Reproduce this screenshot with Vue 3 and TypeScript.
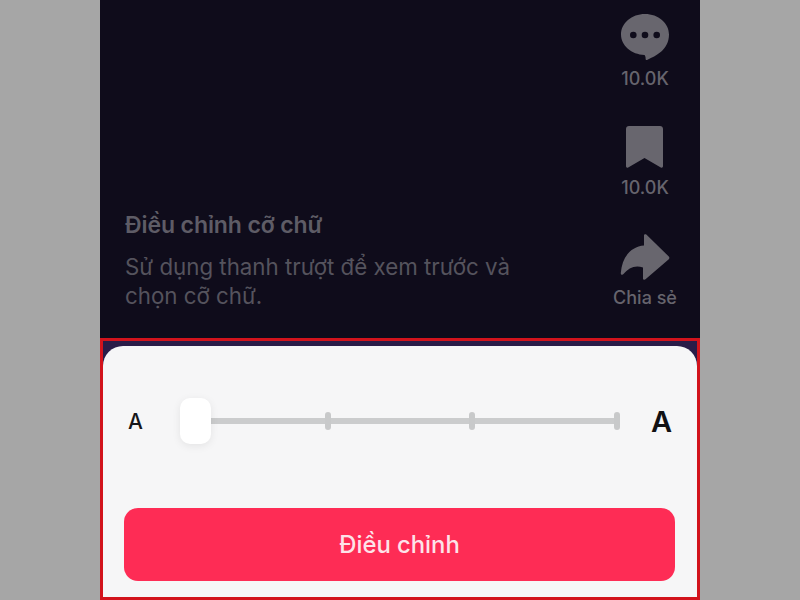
<script setup lang="ts">
const stats = [
  { id: 'comment', label: '10.0K' },
  { id: 'bookmark', label: '10.0K' },
  { id: 'share', label: 'Chia sẻ' },
]
const ticks = [1, 2, 3]
</script>

<template>
  <div class="page">
    <div class="phone">
      <section class="feed">
        <div class="intro">
          <h1 class="intro-title">Điều chỉnh cỡ chữ</h1>
          <p class="intro-text">Sử dụng thanh trượt để xem trước và chọn cỡ chữ.</p>
        </div>
        <div class="actions">
          <div v-for="stat in stats" :key="stat.id" class="action" :class="'action-' + stat.id">
            <svg v-if="stat.id === 'comment'" class="icon" width="48" height="46" viewBox="0 0 48 46">
              <path
                fill="#68666e"
                d="M24 0C10.700 0 0 9.100 0 20.500C0 31.500 10.500 40.500 23.500 41C24.500 42 24.700 44 24.600 45C24.600 46 25.500 46.300 26.500 45.700C31 43.500 35.500 41.500 39 38.500C44.500 34.500 48 28 48 20.500C48 9.100 37.300 0 24 0Z"
              />
              <circle cx="12.300" cy="21" r="3.300" fill="#0f0c1b" />
              <circle cx="24" cy="21" r="3.300" fill="#0f0c1b" />
              <circle cx="35.700" cy="21" r="3.300" fill="#0f0c1b" />
            </svg>
            <svg v-else-if="stat.id === 'bookmark'" class="icon" width="37" height="42" viewBox="0 0 37 42">
              <path
                fill="#68666e"
                d="M3 0H34C35.800 0 37 1.200 37 3V40C37 41.500 36 42 34.800 41.400L18.500 32L2.200 41.400C1 42 0 41.500 0 40V3C0 1.200 1.200 0 3 0Z"
              />
            </svg>
            <svg v-else class="icon" width="50" height="46" viewBox="0 0 50 46">
              <path
                fill="#68666e"
                d="M24 1.500C24 0.200 25.400 -0.300 26.300 0.600L48.800 22.500C49.600 23.300 49.600 24.400 48.800 25.200L25.500 45.300C24.500 46.200 23 45.700 23 44.500V33.500C15 30.500 8.500 34 3.500 40C2.400 41.300 0.700 40.600 0.800 39C2 23 11 12.500 24 11.500Z"
              />
            </svg>
            <span class="action-label">{{ stat.label }}</span>
          </div>
        </div>
      </section>

      <section class="panel">
        <div class="sheet">
          <div class="size-row">
            <span class="size-small">A</span>
            <div class="slider">
              <div class="track"></div>
              <span v-for="t in ticks" :key="t" class="tick" :class="'tick-' + t"></span>
              <div class="thumb"></div>
            </div>
            <span class="size-large">A</span>
          </div>
          <button class="apply-btn" type="button">Điều chỉnh</button>
        </div>
      </section>
    </div>
  </div>
</template>

<style scoped>
.page {
  width: 800px;
  height: 600px;
  overflow: hidden;
  background: #a6a6a6;
  font-family: Inter, "Noto Sans", sans-serif;
}

.phone {
  width: 600px;
  height: 600px;
  margin: 0 auto;
  display: flex;
  flex-direction: column;
}

.feed {
  height: 338px;
  box-sizing: border-box;
  background: #0f0c1b;
  display: flex;
  justify-content: space-between;
  padding: 14px 20px 0 25px;
}

.intro {
  width: 400px;
  padding-top: 196px;
}

.intro-title {
  margin: 0;
  font-size: 23px;
  line-height: 30px;
  font-weight: 600;
  color: #5e5c66;
  letter-spacing: -0.1px;
}

.intro-text {
  margin: 12px 0 0;
  font-size: 22.3px;
  line-height: 29px;
  font-weight: 400;
  color: #55535d;
}

.actions {
  width: 70px;
  display: flex;
  flex-direction: column;
  align-items: center;
}

.action {
  display: flex;
  flex-direction: column;
  align-items: center;
}

.action-bookmark {
  margin-top: 36px;
}

.action-share {
  margin-top: 35px;
}

.icon {
  display: block;
}

.action-label {
  margin-top: 8px;
  font-size: 18px;
  line-height: 22px;
  font-weight: 500;
  color: #66646d;
  white-space: nowrap;
}

.action-bookmark .action-label {
  margin-top: 9px;
}

.action-share .action-label {
  margin-top: 7px;
}

.panel {
  flex: 1;
  min-height: 0;
  box-sizing: border-box;
  border: 3px solid #d2131c;
  background: #2a1c48;
  padding-top: 5px;
}

.sheet {
  height: 100%;
  box-sizing: border-box;
  background: #f6f6f7;
  border-radius: 20px 20px 0 0;
  padding: 52px 22px 0 21px;
}

.size-row {
  display: flex;
  align-items: center;
  height: 46px;
}

.size-small {
  width: 56px;
  padding-left: 4px;
  box-sizing: border-box;
  font-size: 21px;
  font-weight: 500;
  color: #16161a;
}

.slider {
  position: relative;
  flex: 1;
  height: 46px;
}

.track {
  position: absolute;
  left: 0;
  right: 0;
  top: 20px;
  height: 6px;
  background: #cbcccd;
}

.tick {
  position: absolute;
  top: 14px;
  width: 6px;
  height: 18px;
  border-radius: 3px;
  background: #c8c9ca;
}

.tick-1 {
  left: 145px;
}

.tick-2 {
  left: 289px;
}

.tick-3 {
  right: -2px;
}

.thumb {
  position: absolute;
  left: 0;
  top: 0;
  width: 31px;
  height: 46px;
  border-radius: 10px;
  background: #ffffff;
  box-shadow: 0 2px 8px rgba(0, 0, 0, 0.08);
}

.size-large {
  width: 57px;
  text-align: right;
  padding-right: 3px;
  box-sizing: border-box;
  font-size: 29px;
  font-weight: 600;
  color: #111114;
}

.apply-btn {
  display: block;
  width: 100%;
  height: 73px;
  margin-top: 64px;
  border: 0;
  border-radius: 14px;
  background: #fe2c55;
  color: #fde3e9;
  font-family: inherit;
  font-size: 23.8px;
  font-weight: 500;
}
</style>
